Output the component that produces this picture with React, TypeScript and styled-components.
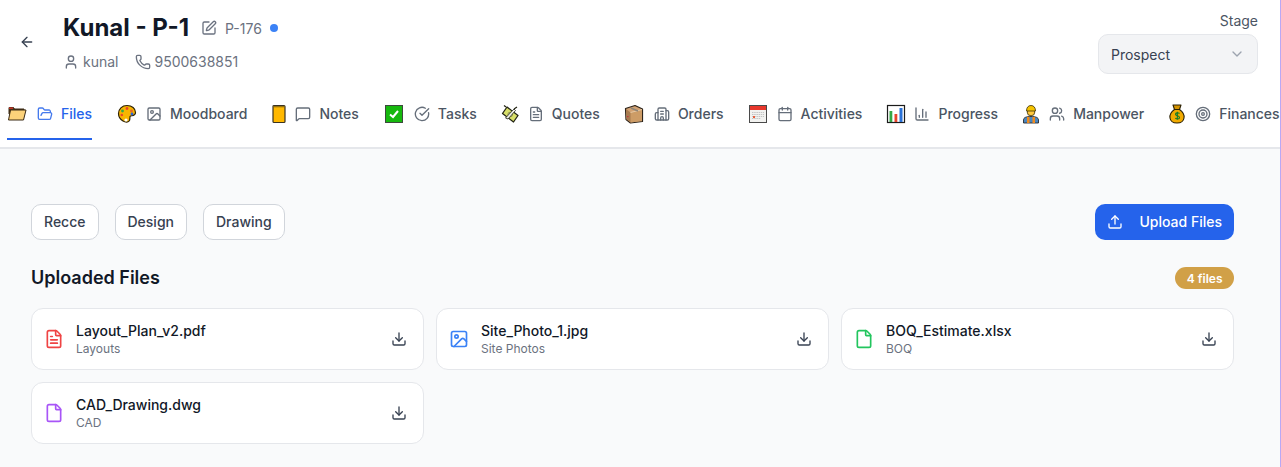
import styled, { createGlobalStyle } from 'styled-components'
import {
  ArrowLeft, User, Phone, SquarePen, FolderOpen, Image, MessageSquare, CircleCheckBig, FileText,
  Building2, Calendar, ChartColumn, Users, Target, Upload, Download, File, ChevronDown,
} from 'lucide-react'
import type { ReactNode } from 'react'

const GlobalStyle = createGlobalStyle`
  * { box-sizing: border-box; }
  html, body { margin: 0; padding: 0; height: 100%; }
  body {
    font-family: Inter, "Liberation Sans", sans-serif;
    background: #f9fafb;
    overflow: hidden;
  }
`

const FolderEmoji = () => (
  <svg width="20" height="20" viewBox="0 0 20 20">
    <path d="M2 10V3.500h4.500l1 1.500H17v5z" fill="#4a3418" stroke="#3b2a14" strokeWidth="1" />
    <path d="M2 3.500h4v1.300H2z" fill="#d8342b" />
    <path d="M1.500 16 3.500 6h15.500l-2.500 10z" fill="#fcd27a" stroke="#3b2a14" strokeWidth="1" strokeLinejoin="round" />
  </svg>
)
const PaletteEmoji = () => (
  <svg width="20" height="20" viewBox="0 0 20 20">
    <path d="M10 1.500c5 0 8.500 3.200 8.500 7 0 3.500-3.500 3-5 3.500-1.200.5-.2 2.500-1 4.500-1 2-4 2-6.500.5C3 15.200 1.500 12.500 1.500 9.500 1.500 5 5 1.500 10 1.500z" fill="#f7b500" stroke="#2e2206" strokeWidth="1.200" />
    <circle cx="10" cy="4.500" r="1.400" fill="#e8452c" />
    <circle cx="5.500" cy="7" r="1.400" fill="#35a845" />
    <circle cx="4.800" cy="11" r="1.300" fill="#e8452c" />
    <circle cx="14.500" cy="7" r="1.400" fill="#e8652c" />
    <circle cx="15" cy="10" r="1.400" fill="#2a62d8" />
    <circle cx="9" cy="16" r="1.600" fill="#fff" />
  </svg>
)
const NotebookEmoji = () => (
  <svg width="20" height="20" viewBox="0 0 20 20">
    <rect x="4" y="1.500" width="12" height="17" rx="1" fill="#ffb800" stroke="#3a3322" strokeWidth="1.200" />
    <rect x="4.600" y="2.100" width="10.800" height="1.200" fill="#8a6a10" />
  </svg>
)
const CheckEmoji = () => (
  <svg width="20" height="20" viewBox="0 0 20 20">
    <rect x="1.500" y="1.500" width="17" height="17" fill="#16b80e" stroke="#3d4a3d" strokeWidth="1" />
    <path d="m6 10.500 3 2.500 5-6" fill="none" stroke="#fff" strokeWidth="2" />
  </svg>
)
const MoneyEmoji = () => (
  <svg width="20" height="20" viewBox="0 0 20 20">
    <path d="M7 3 18 11.500 13.500 18 2.500 9.500z" fill="#d9e06a" stroke="#232414" strokeWidth="1.300" strokeLinejoin="round" />
    <circle cx="10.200" cy="10.500" r="2.300" fill="#f4f7b0" stroke="#6d7330" strokeWidth=".8" />
    <path d="M5.500 14 14 5l1.500 1.500L8 15z" fill="#f4f4ec" stroke="#33352a" strokeWidth=".9" />
    <path d="M6 3 4 1.500M14 5l3-2" stroke="#232414" strokeWidth="1.200" />
  </svg>
)
const BoxEmoji = () => (
  <svg width="20" height="20" viewBox="0 0 20 20">
    <path d="M1.500 4.500 11 1.500l7.500 3.500v12.500L6.500 19 2 15.500z" fill="#d2a273" stroke="#2c231a" strokeWidth="1.200" strokeLinejoin="round" />
    <path d="M2 5 6.500 8.500 18 5.500v11.500L6.500 18.500z" fill="#cd9c66" />
    <path d="M2 5 6.500 8.500v10L2.300 15.200z" fill="#a87b4f" />
    <path d="M6.500 8.500 18 5.500" stroke="#ecd3b2" strokeWidth=".8" />
    <path d="M7 4 14 7" stroke="#8f8578" strokeWidth="1.400" />
    <rect x="3.200" y="12" width="1.200" height="1.200" fill="#c8263a" />
  </svg>
)
const CalendarEmoji = () => (
  <svg width="20" height="20" viewBox="0 0 20 20">
    <rect x="1.500" y="1.500" width="17" height="17" fill="#f2f2f0" stroke="#4a4a4a" strokeWidth="1" />
    <rect x="2" y="2" width="16" height="4" fill="#e8372c" />
    <path d="M4 8.500h12M4 10.500h12M4 12.500h12M4 14.500h9" stroke="#c4c4c4" strokeWidth="1" strokeDasharray="1.500 .7" />
    <rect x="5" y="12" width="2" height="2" fill="#e8603c" />
  </svg>
)
const ChartEmoji = () => (
  <svg width="20" height="20" viewBox="0 0 20 20">
    <rect x="1.500" y="1.500" width="17" height="17" fill="#fff" stroke="#1b1b1b" strokeWidth="1.200" />
    <rect x="3.500" y="7" width="2.800" height="11" fill="#35a845" />
    <rect x="8.500" y="10" width="2.800" height="8" fill="#e8452c" />
    <rect x="13.500" y="4" width="3" height="14" fill="#2a72d8" />
  </svg>
)
const WorkerEmoji = () => (
  <svg width="20" height="20" viewBox="0 0 20 20">
    <path d="M2.500 19v-3c0-2.500 2.800-3.500 7.500-3.500s7.500 1 7.500 3.500v3z" fill="#4a86c0" stroke="#2b2b2b" strokeWidth=".9" />
    <path d="M6 13h2.500v6H6zM11.500 13H14v6h-2.500z" fill="#f08a1d" />
    <circle cx="10" cy="8" r="3.800" fill="#ffc83d" stroke="#3b2d06" strokeWidth=".8" />
    <path d="M5.500 7C5.500 3.500 7.200 1.500 10 1.500s4.500 2 4.500 5.500z" fill="#f6c400" stroke="#3b2d06" strokeWidth=".8" />
  </svg>
)
const BagEmoji = () => (
  <svg width="20" height="20" viewBox="0 0 20 20">
    <path d="M7.500 5.500C4 8 2.500 11 3 14c.5 3.500 3.200 5 7 5s6.500-1.500 7-5c.5-3-1-6-4.500-8.500z" fill="#f2ab00" stroke="#2b2105" strokeWidth="1.100" />
    <path d="M6 1h8l-1.500 4.500h-5z" fill="#d69400" stroke="#2b2105" strokeWidth="1.100" strokeLinejoin="round" />
    <path d="M12.500 9.500c-1-1-4-1-4 .8s4 1.300 4 3.200-3 1.800-4.200.7M10.300 7.800v8" fill="none" stroke="#0e7a2c" strokeWidth="1.100" />
  </svg>
)

type TabItem = { emoji: ReactNode; emojiWidth: number; icon: ReactNode; label: string; active?: boolean }

const tabs: TabItem[] = [
  { emoji: <FolderEmoji />, emojiWidth: 20, icon: <FolderOpen />, label: 'Files', active: true },
  { emoji: <PaletteEmoji />, emojiWidth: 19, icon: <Image />, label: 'Moodboard' },
  { emoji: <NotebookEmoji />, emojiWidth: 13, icon: <MessageSquare />, label: 'Notes' },
  { emoji: <CheckEmoji />, emojiWidth: 20, icon: <CircleCheckBig />, label: 'Tasks' },
  { emoji: <MoneyEmoji />, emojiWidth: 16, icon: <FileText />, label: 'Quotes' },
  { emoji: <BoxEmoji />, emojiWidth: 19, icon: <Building2 />, label: 'Orders' },
  { emoji: <CalendarEmoji />, emojiWidth: 18, icon: <Calendar />, label: 'Activities' },
  { emoji: <ChartEmoji />, emojiWidth: 17, icon: <ChartColumn />, label: 'Progress' },
  { emoji: <WorkerEmoji />, emojiWidth: 16, icon: <Users />, label: 'Manpower' },
  { emoji: <BagEmoji />, emojiWidth: 16, icon: <Target />, label: 'Finances' },
]

const files = [
  { name: 'Layout_Plan_v2.pdf', kind: 'Layouts', color: '#ef4444', icon: FileText },
  { name: 'Site_Photo_1.jpg', kind: 'Site Photos', color: '#3b82f6', icon: Image },
  { name: 'BOQ_Estimate.xlsx', kind: 'BOQ', color: '#22c55e', icon: File },
  { name: 'CAD_Drawing.dwg', kind: 'CAD', color: '#a855f7', icon: File },
]

export default function App() {
  return (
    <Page>
      <GlobalStyle />
      <Header>
        <TopRow>
          <TitleBlock>
            <BackButton><ArrowLeft size={16} /></BackButton>
            <div>
              <TitleRow>
                <Title>Kunal - P-1</Title>
                <EditIcon><SquarePen size={16} /></EditIcon>
                <Code>P-176</Code>
                <Dot />
              </TitleRow>
              <MetaRow>
                <Meta><User size={16} />kunal</Meta>
                <Meta><Phone size={16} />9500638851</Meta>
              </MetaRow>
            </div>
          </TitleBlock>
          <StageBlock>
            <StageLabel>Stage</StageLabel>
            <Select>Prospect<ChevronDown size={16} /></Select>
          </StageBlock>
        </TopRow>
        <TabBar>
          {tabs.map((tab) => (
            <Tab key={tab.label} $active={tab.active}>
              <EmojiBox $width={tab.emojiWidth}>{tab.emoji}</EmojiBox>
              <TabIcon>{tab.icon}</TabIcon>
              {tab.label}
            </Tab>
          ))}
        </TabBar>
      </Header>
      <Content>
        <ActionRow>
          <Chips>
            <Chip>Recce</Chip>
            <Chip>Design</Chip>
            <Chip>Drawing</Chip>
          </Chips>
          <UploadButton><Upload size={16} />Upload Files</UploadButton>
        </ActionRow>
        <SectionRow>
          <SectionTitle>Uploaded Files</SectionTitle>
          <CountBadge>4 files</CountBadge>
        </SectionRow>
        <FileGrid>
          {files.map((file) => (
            <FileCard key={file.name}>
              <FileInfo>
                <file.icon size={20} color={file.color} />
                <div>
                  <FileName>{file.name}</FileName>
                  <FileKind>{file.kind}</FileKind>
                </div>
              </FileInfo>
              <DownloadButton><Download size={16} /></DownloadButton>
            </FileCard>
          ))}
        </FileGrid>
      </Content>
    </Page>
  )
}

const Page = styled.div`
  width: 1281px;
  height: 467px;
  border-right: 1px solid #b9a8f5;
  background: #f9fafb;
  overflow: hidden;
`
const Header = styled.header`
  background: #fff;
  border-bottom: 2px solid #e5e7eb;
  height: 149px;
`
const TopRow = styled.div`
  display: flex;
  justify-content: space-between;
  height: 98px;
  padding: 12px 22px 0 19px;
`
const TitleBlock = styled.div`
  display: flex;
  align-items: center;
  gap: 28px;
  height: 60px;
`
const BackButton = styled.span`
  display: flex;
  color: #374151;
`
const TitleRow = styled.div`
  display: flex;
  align-items: center;
  height: 32px;
`
const Title = styled.h1`
  margin: 0 12px 0 0;
  font-size: 24px;
  line-height: 32px;
  font-weight: 700;
  color: #111827;
`
const EditIcon = styled.span`
  display: flex;
  color: #6b7280;
  margin-right: 8px;
`
const Code = styled.span`
  font-size: 14px;
  color: #6b7280;
  margin-right: 8px;
`
const Dot = styled.span`
  width: 8px;
  height: 8px;
  border-radius: 50%;
  background: #3b82f6;
`
const MetaRow = styled.div`
  display: flex;
  gap: 16px;
  margin-top: 8px;
`
const Meta = styled.span`
  display: flex;
  align-items: center;
  gap: 4px;
  font-size: 14px;
  line-height: 20px;
  color: #6b7280;
`
const StageBlock = styled.div`
  display: flex;
  flex-direction: column;
  align-items: flex-end;
`
const StageLabel = styled.span`
  font-size: 14px;
  line-height: 18px;
  color: #4b5563;
  margin-bottom: 4px;
`
const Select = styled.div`
  width: 160px;
  height: 40px;
  display: flex;
  align-items: center;
  justify-content: space-between;
  padding: 0 12px;
  background: #f3f4f6;
  border: 1px solid #e5e7eb;
  border-radius: 10px;
  font-size: 14px;
  color: #374151;
  svg { color: #9ca3af; }
`
const TabBar = styled.nav`
  display: flex;
  gap: 25px;
  padding-left: 7px;
  height: 42px;
`
const Tab = styled.div<{ $active?: boolean }>`
  display: flex;
  align-items: center;
  flex: none;
  height: 42px;
  padding-bottom: 9px;
  font-size: 14px;
  font-weight: 450;
  white-space: nowrap;
  color: ${(props) => (props.$active ? '#2563eb' : '#4b5563')};
  border-bottom: 2px solid ${(props) => (props.$active ? '#2563eb' : 'transparent')};
`
const EmojiBox = styled.span<{ $width: number }>`
  display: flex;
  justify-content: center;
  width: ${(props) => props.$width}px;
  margin-right: 10px;
  svg { flex: none; }
`
const TabIcon = styled.span`
  display: flex;
  margin-right: 8px;
  svg { width: 16px; height: 16px; opacity: .85; }
`
const Content = styled.main`
  padding: 55px 46px 0 31px;
`
const ActionRow = styled.div`
  display: flex;
  justify-content: space-between;
`
const Chips = styled.div`
  display: flex;
  gap: 16px;
`
const Chip = styled.button`
  height: 36px;
  padding: 0 12px 1px;
  background: #fff;
  border: 1px solid #d1d5db;
  border-radius: 10px;
  font: 450 14px Inter, sans-serif;
  color: #374151;
`
const UploadButton = styled.button`
  width: 139px;
  height: 36px;
  display: flex;
  align-items: center;
  justify-content: space-between;
  padding: 0 12px 1px;
  background: #2563eb;
  border: 0;
  border-radius: 10px;
  font: 500 14px Inter, sans-serif;
  color: #fff;
`
const SectionRow = styled.div`
  display: flex;
  justify-content: space-between;
  align-items: center;
  margin-top: 24px;
  height: 28px;
`
const SectionTitle = styled.h2`
  margin: 0;
  font-size: 18px;
  line-height: 28px;
  font-weight: 600;
  color: #111827;
`
const CountBadge = styled.span`
  display: flex;
  align-items: center;
  height: 22px;
  padding: 0 11.5px;
  border-radius: 11px;
  background: #d1a047;
  font-size: 12px;
  font-weight: 600;
  color: #fff;
`
const FileGrid = styled.div`
  display: grid;
  grid-template-columns: repeat(3, 1fr);
  gap: 12px;
  margin-top: 16px;
`
const FileCard = styled.div`
  height: 62px;
  display: flex;
  align-items: center;
  justify-content: space-between;
  padding: 0 16px 0 12px;
  background: #fff;
  border: 1px solid #e5e7eb;
  border-radius: 12px;
`
const FileInfo = styled.div`
  display: flex;
  align-items: center;
  gap: 12px;
`
const FileName = styled.div`
  font-size: 14px;
  line-height: 20px;
  font-weight: 450;
  color: #111827;
`
const FileKind = styled.div`
  font-size: 12px;
  line-height: 16px;
  color: #6b7280;
`
const DownloadButton = styled.span`
  display: flex;
  color: #374151;
`
